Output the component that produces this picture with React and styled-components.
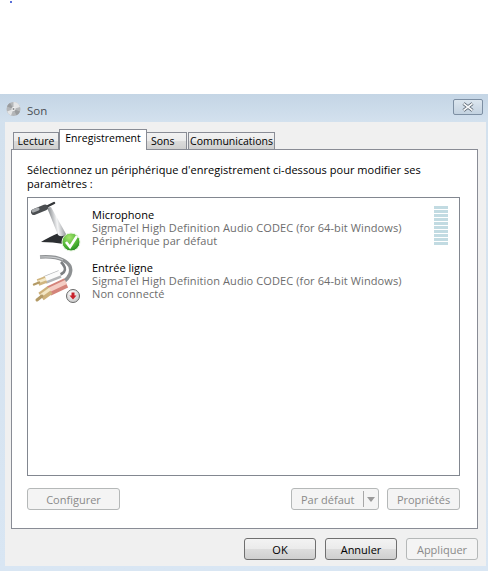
import styled, { createGlobalStyle } from "styled-components";

const GlobalStyle = createGlobalStyle`
  html, body {
    margin: 0;
    padding: 0;
    background: #fff;
  }
  body {
    font-family: "Open Sans", "Noto Sans", sans-serif;
    font-size: 11px;
    color: #000;
    overflow: hidden;
  }
`;

const Page = styled.div`
  width: 488px;
  height: 571px;
  display: flex;
  flex-direction: column;
`;

const TopArea = styled.div`
  height: 94px;
  flex: none;
  padding: 1px 0 0 10px;
  box-sizing: border-box;
`;

const Speck = styled.div`
  width: 2px;
  height: 2px;
  background: #5a6fd8;
`;

const Win = styled.div`
  flex: 1;
  display: flex;
  flex-direction: column;
  background: linear-gradient(180deg, #c4d5e5 0, #d3e1ee 28px, #d9e6f3 100%);
  padding: 0 2px 5px 5px;
  min-height: 0;
`;

const TitleBar = styled.div`
  height: 28px;
  flex: none;
  display: flex;
  align-items: center;
  padding: 2px 3px 0 1px;
  box-sizing: border-box;
`;

const Title = styled.span`
  font-size: 11.5px;
  color: #4a4f55;
  margin: 2px 0 0 5px;
  flex: 1;
`;

const CloseBtn = styled.div`
  width: 30px;
  height: 16px;
  box-sizing: border-box;
  border: 1px solid #7d8fa3;
  border-radius: 2px;
  background: linear-gradient(180deg, #dce6ef, #c3d2e0);
  display: flex;
  align-items: center;
  justify-content: center;
  margin-top: -4px;
`;

const Client = styled.div`
  flex: 1;
  background: #f0f0f0;
  display: flex;
  flex-direction: column;
  padding: 7px 8px 8px 6px;
  min-height: 0;
`;

const Tabs = styled.div`
  display: flex;
  align-items: flex-end;
  height: 21px;
  padding-left: 2px;
  flex: none;
  position: relative;
  z-index: 1;
  margin-bottom: -1px;
`;

const Tab = styled.div`
  box-sizing: border-box;
  width: ${({ $w }) => $w}px;
  height: ${({ $active }) => ($active ? 21 : 18)}px;
  margin-left: ${({ $gap }) => $gap || 0}px;
  border: 1px solid #898c95;
  border-bottom: ${({ $active }) => ($active ? "none" : "1px solid #898c95")};
  border-left: ${({ $hideLeft }) => ($hideLeft ? "none" : "1px solid #898c95")};
  background: ${({ $active }) =>
    $active ? "#fff" : "linear-gradient(180deg, #f2f2f2 0, #ebebeb 50%, #dcdcdc 51%, #cfcfcf 100%)"};
  padding: ${({ $active, $pad }) => ($active ? "0 0 3px" : `0 0 0 ${$pad || 0}px`)};
  display: flex;
  align-items: center;
  justify-content: ${({ $pad }) => ($pad ? "flex-start" : "center")};
  white-space: nowrap;
  font-size: 10.5px;
  line-height: 13px;
`;

const Panel = styled.div`
  height: 380px;
  flex: none;
  box-sizing: border-box;
  background: #fff;
  border: 1px solid #898c95;
  padding: 13px 17px 0 15px;
  display: flex;
  flex-direction: column;
`;

const Intro = styled.p`
  margin: 0 0 6px;
  height: 28px;
  line-height: 14px;
  font-size: 11px;
  letter-spacing: 0.03px;
  flex: none;
`;

const DeviceList = styled.div`
  height: 279px;
  flex: none;
  box-sizing: border-box;
  border: 1px solid #828790;
  padding: 3px 11px 0 3px;
  display: flex;
  flex-direction: column;
  background: #fff;
`;

const DeviceRow = styled.div`
  height: 53px;
  flex: none;
  display: flex;
  align-items: flex-start;
`;

const IconSlot = styled.div`
  width: 61px;
  height: 52px;
  flex: none;
`;

const DeviceText = styled.div`
  flex: 1;
  padding-top: 7px;
  display: flex;
  flex-direction: column;
  font-size: 11px;
  line-height: 13px;
  white-space: nowrap;
`;

const DeviceName = styled.span`
  color: #000;
`;

const DeviceInfo = styled.span`
  color: #6d6d6d;
  letter-spacing: 0.1px;
`;

const Meter = styled.div`
  width: 14px;
  margin-top: 5px;
  display: flex;
  flex-direction: column;
  gap: 1px;
  flex: none;
`;

const MeterBar = styled.div`
  height: 3px;
  background: #c2dbe2;
`;

const PanelActions = styled.div`
  display: flex;
  align-items: center;
  margin-top: 12px;
  gap: 8px;
`;

const Btn = styled.div`
  box-sizing: border-box;
  width: ${({ $w }) => $w}px;
  height: 22px;
  flex: none;
  display: flex;
  align-items: center;
  justify-content: center;
  border-radius: 3px;
  font-size: 11px;
  border: 1px solid ${({ $off }) => ($off ? "#b5b8b8" : "#6f6f6f")};
  color: ${({ $off }) => ($off ? "#8a8a8a" : "#000")};
  background: ${({ $off }) =>
    $off ? "#f4f4f4" : "linear-gradient(180deg, #f3f3f3 0, #ebebeb 48%, #dddddd 50%, #cfcfcf 100%)"};
`;

const Spacer = styled.div`
  flex: 1;
`;

const SplitBtn = styled(Btn)`
  justify-content: flex-start;
  padding-left: 9px;
`;

const SplitLabel = styled.span`
  flex: 1;
`;

const SplitArrow = styled.span`
  width: 14px;
  height: 16px;
  border-left: 1px solid #a8a8a8;
  display: flex;
  align-items: center;
  justify-content: center;
`;

const Caret = styled.span`
  width: 0;
  height: 0;
  border-left: 4px solid transparent;
  border-right: 4px solid transparent;
  border-top: 5px solid #9a9a9a;
`;

const Footer = styled.div`
  display: flex;
  justify-content: flex-end;
  gap: 9px;
  margin-top: 9px;
  flex: none;
`;

function SpeakerIcon() {
  return (
    <svg width="16" height="16" viewBox="0 0 16 16">
      <circle cx="7.5" cy="8" r="7" fill="#b4b6b8" />
      <path d="M7.5 1A7 7 0 0 1 14 6L7.5 8ZM1 10.5L7.5 8L5 14.5A7 7 0 0 1 1 10.5Z" fill="#e4e5e6" />
      <path d="M1 5.5L7.5 8L4 2A7 7 0 0 0 1 5.5ZM14 10.5L7.5 8L10.5 14.3A7 7 0 0 0 14 10.5Z" fill="#9a9c9e" />
      <circle cx="7.5" cy="8" r="2" fill="#f2f2f2" />
      <circle cx="7.5" cy="8" r="1" fill="#8a8c8e" />
    </svg>
  );
}

function CloseIcon() {
  return (
    <svg width="14" height="10" viewBox="0 0 14 10">
      <path d="M2.5 1.5L11.5 8.5M11.5 1.5L2.5 8.5" stroke="#4e5a66" strokeWidth="3.2" />
      <path d="M2.5 1.5L11.5 8.5M11.5 1.5L2.5 8.5" stroke="#f6f8fa" strokeWidth="1.6" />
    </svg>
  );
}

function MicIcon() {
  return (
    <svg width="61" height="52" viewBox="0 0 61 52">
      <defs>
        <linearGradient id="stem" x1="0" y1="0.2" x2="1" y2="0">
          <stop offset="0" stopColor="#74787c" />
          <stop offset=".45" stopColor="#f4f5f6" />
          <stop offset="1" stopColor="#6a6e72" />
        </linearGradient>
        <radialGradient id="ok" cx=".4" cy=".25" r=".85">
          <stop offset="0" stopColor="#a5e56e" />
          <stop offset=".6" stopColor="#4cb233" />
          <stop offset="1" stopColor="#157a1c" />
        </radialGradient>
      </defs>
      <path d="M10 41Q18 36 30 31L36 34L33 43Q22 41 10 41Z" fill="#2c2f32" />
      <path d="M16 6.5L20 6L35 33Q31 37 27 34Z" fill="url(#stem)" />
      <path d="M13 7L23 2" stroke="#35383b" strokeWidth="2.5" strokeLinecap="round" />
      <path d="M3 11L14 6.5" stroke="#4a4d50" strokeWidth="6" strokeLinecap="round" />
      <path d="M2 10L7 8" stroke="#a8abae" strokeWidth="3" strokeLinecap="round" />
      <circle cx="40" cy="41" r="9" fill="url(#ok)" stroke="#e8f4e0" strokeWidth="1" />
      <path d="M35 41L39 46L46 35" stroke="#fff" strokeWidth="2.6" fill="none" />
    </svg>
  );
}

function LineInIcon() {
  return (
    <svg width="61" height="52" viewBox="0 0 61 52">
      <defs>
        <radialGradient id="badge" cx=".4" cy=".3" r=".8">
          <stop offset="0" stopColor="#fcfcfc" />
          <stop offset="1" stopColor="#c4c4c4" />
        </radialGradient>
      </defs>
      <path d="M9 3Q24 2 32 6Q42 11 39 20Q37 25 32 28" stroke="#8e9193" strokeWidth="3.4" fill="none" />
      <path d="M9 3Q24 2 32 6" stroke="#c9cbcd" strokeWidth="1.2" fill="none" />
      <path d="M30 8Q36 14 33 18Q31 20 28 21" stroke="#7c7f82" strokeWidth="2.6" fill="none" />
      {/* white plug */}
      <path d="M14 26L29 20" stroke="#b4b6b8" strokeWidth="8" />
      <path d="M14 25L29 19" stroke="#fbfbfb" strokeWidth="5" />
      <path d="M7 28.5L15 25.5" stroke="#d0b57e" strokeWidth="7" />
      <path d="M7 28L15 25" stroke="#f3e8c8" strokeWidth="2.6" />
      <path d="M3 30.5L8 28.5" stroke="#b39a66" strokeWidth="2.4" strokeLinecap="round" />
      {/* red plug */}
      <path d="M18 37L35 29" stroke="#d4837a" strokeWidth="10" />
      <path d="M18 36L35 28" stroke="#f4cdc4" strokeWidth="4.5" />
      <path d="M10 42.5L19 36" stroke="#cdb07a" strokeWidth="9" />
      <path d="M10 41.5L19 35" stroke="#f3e6c4" strokeWidth="3.2" />
      <path d="M6 46L11 42" stroke="#b39a66" strokeWidth="3" strokeLinecap="round" />
      <circle cx="42" cy="42" r="6.5" fill="url(#badge)" stroke="#6a6a6a" strokeWidth="1" />
      <path d="M40.5 38.5H43.5V41.5H45.5L42 45.5L38.5 41.5H40.5Z" fill="#c8202a" />
    </svg>
  );
}

const meterBars = Array.from({ length: 10 }, (_, i) => i);

export default function App() {
  return (
    <Page>
      <GlobalStyle />
      <TopArea>
        <Speck />
      </TopArea>
      <Win>
        <TitleBar>
          <SpeakerIcon />
          <Title>Son</Title>
          <CloseBtn>
            <CloseIcon />
          </CloseBtn>
        </TitleBar>
        <Client>
          <Tabs>
            <Tab $w={46}>Lecture</Tab>
            <Tab $w={88} $active>Enregistrement</Tab>
            <Tab $w={40} $hideLeft $pad={4}>Sons</Tab>
            <Tab $w={87} $gap={1}>Communications</Tab>
          </Tabs>
          <Panel>
            <Intro>
              Sélectionnez un périphérique d'enregistrement ci-dessous pour modifier ses
              <br />
              paramètres :
            </Intro>
            <DeviceList>
              <DeviceRow>
                <IconSlot>
                  <MicIcon />
                </IconSlot>
                <DeviceText>
                  <DeviceName>Microphone</DeviceName>
                  <DeviceInfo>SigmaTel High Definition Audio CODEC (for 64-bit Windows)</DeviceInfo>
                  <DeviceInfo>Périphérique par défaut</DeviceInfo>
                </DeviceText>
                <Meter>
                  {meterBars.map((i) => (
                    <MeterBar key={i} />
                  ))}
                </Meter>
              </DeviceRow>
              <DeviceRow>
                <IconSlot>
                  <LineInIcon />
                </IconSlot>
                <DeviceText>
                  <DeviceName>Entrée ligne</DeviceName>
                  <DeviceInfo>SigmaTel High Definition Audio CODEC (for 64-bit Windows)</DeviceInfo>
                  <DeviceInfo>Non connecté</DeviceInfo>
                </DeviceText>
              </DeviceRow>
            </DeviceList>
            <PanelActions>
              <Btn $w={93} $off>Configurer</Btn>
              <Spacer />
              <SplitBtn $w={88} $off>
                <SplitLabel>Par défaut</SplitLabel>
                <SplitArrow>
                  <Caret />
                </SplitArrow>
              </SplitBtn>
              <Btn $w={73} $off>Propriétés</Btn>
            </PanelActions>
          </Panel>
          <Footer>
            <Btn $w={72}>OK</Btn>
            <Btn $w={72}>Annuler</Btn>
            <Btn $w={72} $off>Appliquer</Btn>
          </Footer>
        </Client>
      </Win>
    </Page>
  );
}
